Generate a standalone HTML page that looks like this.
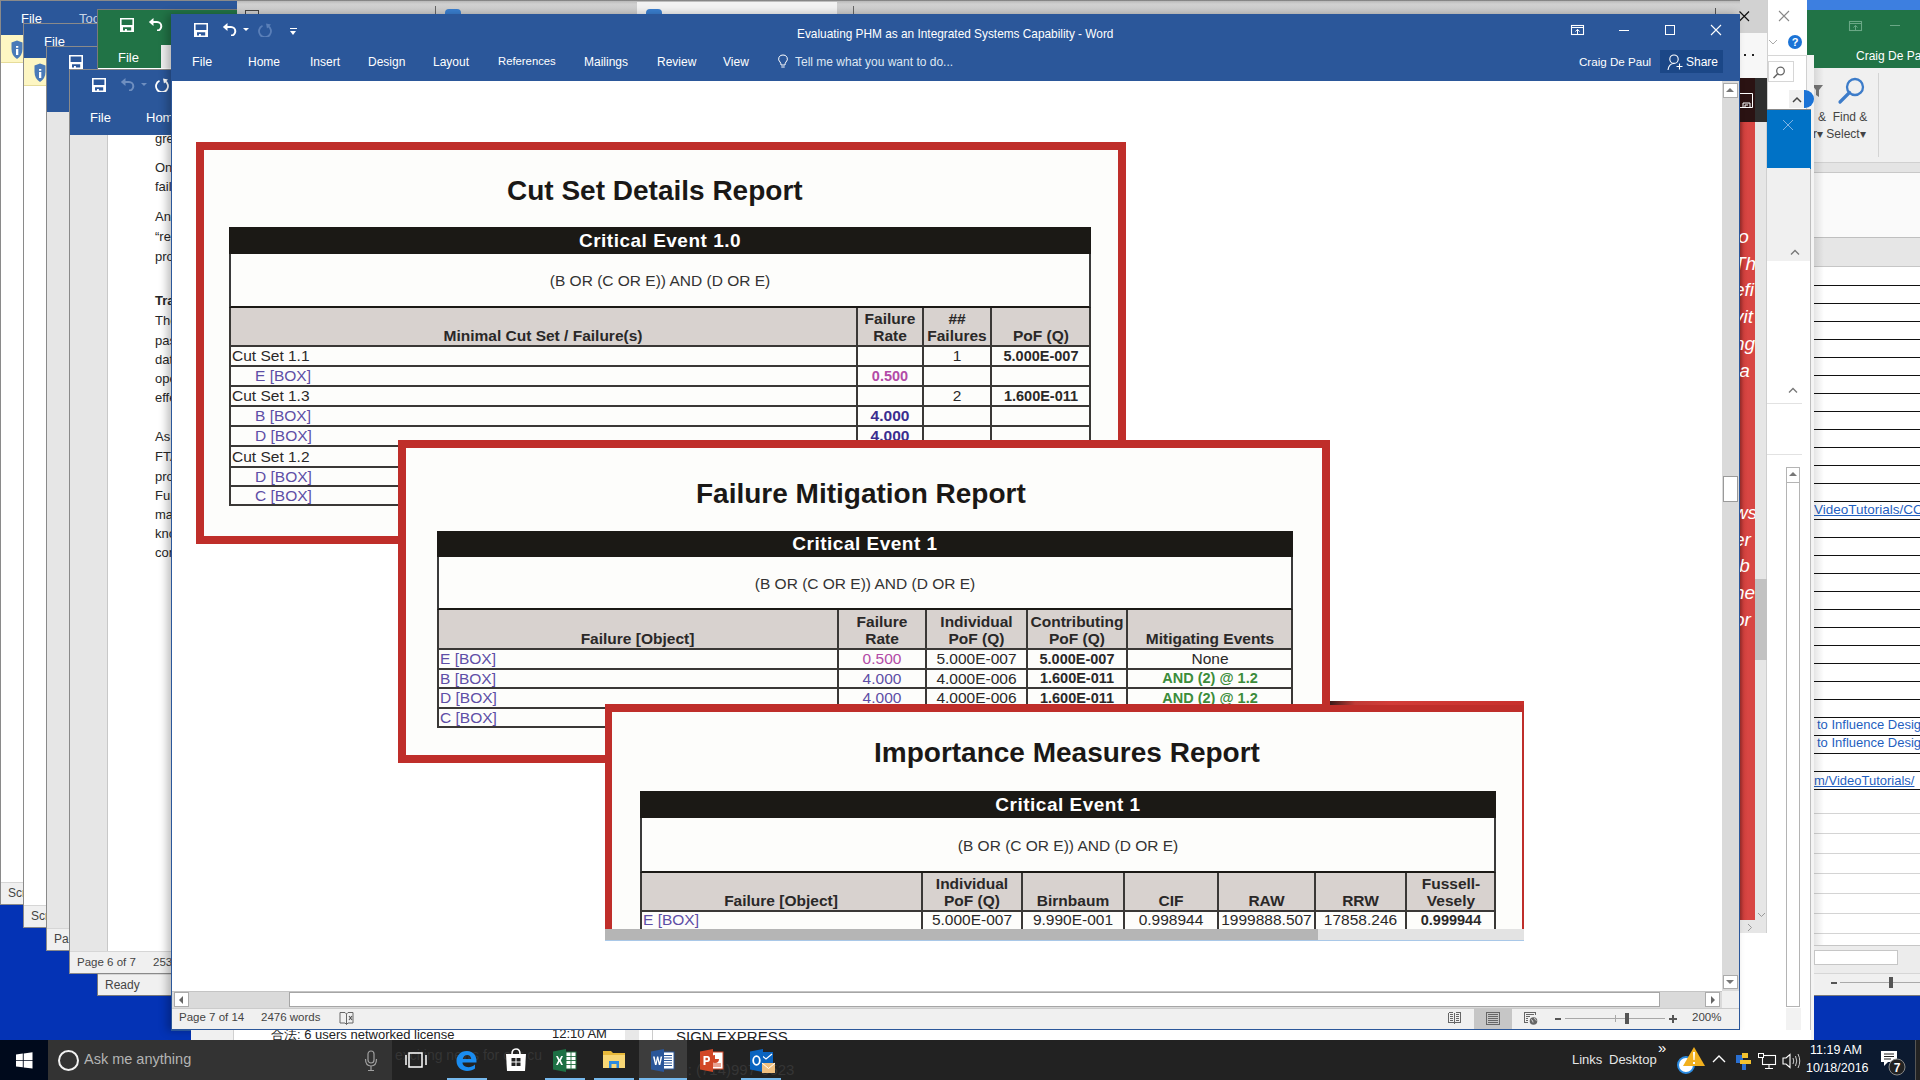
<!DOCTYPE html>
<html><head><meta charset="utf-8">
<style>
*{margin:0;padding:0;box-sizing:border-box}
html,body{width:1920px;height:1080px;overflow:hidden;background:#0433b5;font-family:"Liberation Sans",sans-serif;}
.a{position:absolute}
.wt{color:#fff;font-size:12px;white-space:nowrap}
.blue{background:#2b579a}
.st{background:#f0f0f0;border-top:1px solid #d6d6d6;color:#444;font-size:12px;white-space:nowrap;padding-left:7px;line-height:21px}

.rb{position:absolute;background:#fdfdfb;border:8px solid #bf2e2a}
.tt{position:absolute;font-weight:bold;font-size:28px;color:#1a1816;white-space:nowrap;letter-spacing:0}
.blk{position:absolute;background:#1b1915;color:#fff;font-weight:bold;font-size:19px;letter-spacing:0.5px;text-align:center;white-space:nowrap}
.expr{position:absolute;background:#fdfdfb;border-left:2px solid #3b3b3b;border-right:2px solid #3b3b3b;border-bottom:2.5px solid #1b1915;color:#333;font-size:15.5px;text-align:center;white-space:nowrap}
.c{position:absolute;white-space:nowrap;font-size:15.5px;color:#2a2828;overflow:hidden}
.hd{background:#d8d2cf;font-weight:bold;text-align:center;line-height:17px;color:#2a2828;border-right:1.5px solid #333}
.pu{color:#5d4ea6}
.pk{color:#b24aa6}
.bl{color:#3b2d8f;font-weight:bold}
.gr{color:#3c8c3a}
.b{font-weight:bold;font-size:14.5px}
</style></head><body>

<svg width="0" height="0" style="position:absolute">
 <defs>
  <symbol id="save" viewBox="0 0 14 14"><path fill="currentColor" fill-rule="evenodd" d="M0 0H14V14H0Z M1.6 1.6V6.9H12.4V1.6Z M3 9.3V12.5H5V10.9H6.9V12.5H11.2V9.3Z"/></symbol>
  <symbol id="undo" viewBox="0 0 18 14"><path fill="currentColor" d="M0.8 5 L5.5 1 L5.5 9 Z"/><path d="M5 5 H9 A4.3 4.3 0 0 1 9 13.6" fill="none" stroke="currentColor" stroke-width="2"/></symbol>
  <symbol id="redo" viewBox="0 0 14 14"><path d="M9.5 2.2 A6 6 0 1 1 4.5 2.2" fill="none" stroke="currentColor" stroke-width="1.8" transform="translate(0,0.5)"/><path fill="currentColor" d="M8 0.5 L13 1.5 L9 5.5 Z"/></symbol>
 </defs>
</svg>

<!-- ============ Window A ============ -->
<div class="a" style="left:0;top:0;width:1920px;height:905px;background:#fff;border:1px solid #8a8a8a"></div>
<div class="a blue" style="left:1px;top:1px;width:1919px;height:34px"></div>
<div class="a wt" style="left:21px;top:11px;font-size:13px">File</div>
<div class="a wt" style="left:79px;top:11px;font-size:13px;color:#c8d4e6">Tools</div>
<div class="a" style="left:1px;top:35px;width:1919px;height:28px;background:#fdf6c3;border-bottom:1px solid #e6dc9a"></div>
<div class="a st" style="left:1px;top:882px;width:1919px;height:22px">Screen</div>
<svg class="a" style="left:11px;top:40px" width="12" height="20"><path d="M6 0.5 L11.5 2.5 V9 Q11.5 15.5 6 19 Q0.5 15.5 0.5 9 V2.5Z" fill="#4a7ab8"/><path d="M5 6H7.3V7.8H5Z M5 9H7.3V15H5Z" fill="#fff"/></svg>

<!-- ============ Window B ============ -->
<div class="a" style="left:23px;top:23px;width:1897px;height:905px;background:#fff;border:1px solid #8a8a8a"></div>
<div class="a blue" style="left:24px;top:24px;width:1896px;height:34px"></div>
<div class="a wt" style="left:44px;top:34px;font-size:13px">File</div>
<div class="a" style="left:24px;top:58px;width:1896px;height:28px;background:#fdf6c3;border-bottom:1px solid #e6dc9a"></div>
<div class="a st" style="left:24px;top:905px;width:1896px;height:22px">Screen</div>
<svg class="a" style="left:34px;top:63px" width="12" height="20"><path d="M6 0.5 L11.5 2.5 V9 Q11.5 15.5 6 19 Q0.5 15.5 0.5 9 V2.5Z" fill="#4a7ab8"/><path d="M5 6H7.3V7.8H5Z M5 9H7.3V15H5Z" fill="#fff"/></svg>

<!-- ============ Window C ============ -->
<div class="a" style="left:46px;top:46px;width:1874px;height:905px;background:#e6e6e6;border:1px solid #8a8a8a"></div>
<div class="a blue" style="left:47px;top:47px;width:1873px;height:65px"></div>
<div class="a st" style="left:47px;top:928px;width:1873px;height:22px">Page</div>
<svg class="a" style="left:69px;top:55px;color:#fff" width="14" height="14"><use href="#save"/></svg>

<!-- ============ Excel ============ -->
<div class="a" style="left:97px;top:9px;width:1823px;height:987px;background:#fff;border:1px solid #7a7a7a"></div>
<div class="a" style="left:98px;top:10px;width:1822px;height:58px;background:#217346"></div>
<div class="a wt" style="left:118px;top:50px;font-size:13px">File</div>
<div class="a" style="left:161px;top:45px;width:12px;height:23px;background:#f0f0f0"></div>
<div class="a st" style="left:98px;top:974px;width:1822px;height:21px">Ready</div>
<svg class="a" style="left:120px;top:18px;color:#fff" width="14" height="14"><use href="#save"/></svg>
<svg class="a" style="left:148px;top:17px;color:#fff" width="18" height="14"><use href="#undo"/></svg>

<!-- ============ Window D ============ -->
<div class="a" style="left:69px;top:69px;width:1851px;height:905px;background:#fff;border:1px solid #8a8a8a"></div>
<div class="a blue" style="left:70px;top:70px;width:1850px;height:65px"></div>
<div class="a" style="left:70px;top:135px;width:38px;height:816px;background:#e6e6e6;border-right:1px solid #c8c8c8"></div>
<svg class="a" style="left:92px;top:78px;color:#fff" width="14" height="14"><use href="#save"/></svg>
<svg class="a" style="left:120px;top:77px;color:#6f8fc0" width="18" height="14"><use href="#undo"/></svg>
<div class="a" style="left:141px;top:83px;width:0;height:0;border-left:3px solid transparent;border-right:3px solid transparent;border-top:3px solid #6f8fc0"></div>
<svg class="a" style="left:155px;top:78px;color:#fff" width="14" height="14"><use href="#redo"/></svg>
<div class="a wt" style="left:90px;top:110px;font-size:13px">File</div>
<div class="a wt" style="left:146px;top:110px;font-size:13px">Home</div>
<div class="a st" style="left:70px;top:951px;width:1850px;height:22px"><span style="font-size:11.5px">Page 6 of 7</span><span style="position:absolute;left:83px;font-size:11.5px">2536 words</span></div>


<div class="a" style="left:108px;top:135px;width:63px;height:816px;overflow:hidden;font-size:13px;color:#262626;line-height:19.4px">
 <div class="a" style="left:47px;top:-6px;white-space:nowrap">greater</div>
 <div class="a" style="left:47px;top:23px;white-space:nowrap">One</div>
 <div class="a" style="left:47px;top:42px;white-space:nowrap">failure</div>
 <div class="a" style="left:47px;top:72px;white-space:nowrap">Another</div>
 <div class="a" style="left:47px;top:92px;white-space:nowrap">&ldquo;relia</div>
 <div class="a" style="left:47px;top:112px;white-space:nowrap">product</div>
 <div class="a" style="left:47px;top:156px;white-space:nowrap;font-weight:bold">Trade</div>
 <div class="a" style="left:47px;top:176px;white-space:nowrap">The</div>
 <div class="a" style="left:47px;top:196px;white-space:nowrap">past</div>
 <div class="a" style="left:47px;top:215px;white-space:nowrap">data</div>
 <div class="a" style="left:47px;top:234px;white-space:nowrap">operat</div>
 <div class="a" style="left:47px;top:253px;white-space:nowrap">effect</div>
 <div class="a" style="left:47px;top:292px;white-space:nowrap">As an</div>
 <div class="a" style="left:47px;top:312px;white-space:nowrap">FTA</div>
 <div class="a" style="left:47px;top:332px;white-space:nowrap">product</div>
 <div class="a" style="left:47px;top:351px;white-space:nowrap">Funct</div>
 <div class="a" style="left:47px;top:370px;white-space:nowrap">many</div>
 <div class="a" style="left:47px;top:389px;white-space:nowrap">know</div>
 <div class="a" style="left:47px;top:408px;white-space:nowrap">cont</div>
</div>

<!-- ============ Browser strip ============ -->
<div class="a" style="left:237px;top:0;width:1530px;height:14px;background:linear-gradient(#6a6a6a 0px,#bdbdbd 1.5px,#d0d0d0 4px,#cdcdcd 14px)"></div>
<div class="a" style="left:637px;top:2px;width:200px;height:12px;background:#f2f2f2"></div>
<div class="a" style="left:245px;top:10px;width:14px;height:6px;border:1.5px solid #444;border-bottom:none"></div>
<div class="a" style="left:435px;top:6px;width:1px;height:8px;background:#666"></div>
<div class="a" style="left:445px;top:9px;width:16px;height:6px;border-radius:4px 4px 0 0;background:#3a7fd0"></div>
<div class="a" style="left:646px;top:9px;width:16px;height:6px;border-radius:4px 4px 0 0;background:#3a7fd0"></div>
<div class="a" style="left:853px;top:6px;width:1px;height:8px;background:#666"></div>
<div class="a" style="left:1715px;top:8px;width:1px;height:6px;background:#555"></div>


<!-- ============ RIGHT SIDE: Excel right part ============ -->
<div class="a" style="left:1806px;top:0;width:114px;height:10px;background:#3d7fe0"></div>
<div class="a" style="left:1806px;top:10px;width:114px;height:58px;background:#217346"></div>
<svg class="a" style="left:1848px;top:20px" width="16" height="12"><rect x="1.5" y="1.5" width="12" height="9" fill="none" stroke="#6aa886" stroke-width="1.1"/><path d="M1.5 3.5H13.5M7.5 10V5.5M5.5 7.5L7.5 5.3L9.5 7.5" fill="none" stroke="#6aa886"/></svg>
<div class="a" style="left:1890px;top:25px;width:10px;height:1px;background:#6aa886"></div>
<div class="a wt" style="left:1856px;top:49px;font-size:12px">Craig De Paul</div>
<div class="a" style="left:1814px;top:68px;width:106px;height:95px;background:#f0f0f0"></div>
<svg class="a" style="left:1812px;top:84px" width="12" height="14"><path d="M0 1H11L7 6V13L4 11V6Z" fill="#777"/></svg>
<svg class="a" style="left:1837px;top:77px" width="30" height="28"><circle cx="18" cy="10" r="8" fill="none" stroke="#3d7cc9" stroke-width="2.3"/><path d="M12.5 15.5L3 25" stroke="#3d7cc9" stroke-width="3.2" stroke-linecap="round"/></svg>
<div class="a" style="left:1818px;top:110px;font-size:12px;color:#444;white-space:nowrap">&amp;&nbsp;&nbsp;Find &amp;</div>
<div class="a" style="left:1813px;top:127px;font-size:12px;color:#444;white-space:nowrap">r&#9662;&nbsp;Select&#9662;</div>
<div class="a" style="left:1878px;top:73px;width:1px;height:84px;background:#d4d4d4"></div>
<div class="a" style="left:1814px;top:162px;width:106px;height:10px;background:#e4e4e4;border-top:1px solid #d0d0d0"></div>
<div class="a" style="left:1814px;top:172px;width:106px;height:65px;background:#fafafa;border-top:1px solid #c8c8c8"></div>
<div class="a" style="left:1814px;top:237px;width:106px;height:30px;background:#e6e6e6;border-top:1px solid #bfbfbf;border-bottom:1px solid #c6c6c6"></div>
<div class="a" style="left:1814px;top:267px;width:106px;height:678px;background:#fff;overflow:hidden">
<div class="a" style="left:0;top:18px;width:110px;height:1px;background:#111"></div>
<div class="a" style="left:0;top:36px;width:110px;height:1px;background:#111"></div>
<div class="a" style="left:0;top:54px;width:110px;height:1px;background:#111"></div>
<div class="a" style="left:0;top:72px;width:110px;height:1px;background:#111"></div>
<div class="a" style="left:0;top:90px;width:110px;height:1px;background:#111"></div>
<div class="a" style="left:0;top:108px;width:110px;height:1px;background:#111"></div>
<div class="a" style="left:0;top:126px;width:110px;height:1px;background:#111"></div>
<div class="a" style="left:0;top:144px;width:110px;height:1px;background:#111"></div>
<div class="a" style="left:0;top:162px;width:110px;height:1px;background:#111"></div>
<div class="a" style="left:0;top:180px;width:110px;height:1px;background:#111"></div>
<div class="a" style="left:0;top:198px;width:110px;height:1px;background:#111"></div>
<div class="a" style="left:0;top:216px;width:110px;height:1px;background:#111"></div>
<div class="a" style="left:0;top:234px;width:110px;height:1px;background:#111"></div>
<div class="a" style="left:0;top:252px;width:110px;height:1px;background:#111"></div>
<div class="a" style="left:0;top:270px;width:110px;height:1px;background:#111"></div>
<div class="a" style="left:0;top:288px;width:110px;height:1px;background:#111"></div>
<div class="a" style="left:0;top:306px;width:110px;height:1px;background:#111"></div>
<div class="a" style="left:0;top:324px;width:110px;height:1px;background:#111"></div>
<div class="a" style="left:0;top:342px;width:110px;height:1px;background:#111"></div>
<div class="a" style="left:0;top:360px;width:110px;height:1px;background:#111"></div>
<div class="a" style="left:0;top:378px;width:110px;height:1px;background:#111"></div>
<div class="a" style="left:0;top:396px;width:110px;height:1px;background:#111"></div>
<div class="a" style="left:0;top:414px;width:110px;height:1px;background:#111"></div>
<div class="a" style="left:0;top:432px;width:110px;height:1px;background:#111"></div>
<div class="a" style="left:0;top:450px;width:110px;height:1px;background:#111"></div>
<div class="a" style="left:0;top:468px;width:110px;height:1px;background:#111"></div>
<div class="a" style="left:0;top:486px;width:110px;height:1px;background:#111"></div>
<div class="a" style="left:0;top:504px;width:110px;height:1px;background:#111"></div>
<div class="a" style="left:0;top:522px;width:110px;height:1px;background:#111"></div>
<div class="a" style="left:0;top:546px;width:110px;height:1px;background:#d4d4d4"></div>
<div class="a" style="left:0;top:566px;width:110px;height:1px;background:#d4d4d4"></div>
<div class="a" style="left:0;top:586px;width:110px;height:1px;background:#d4d4d4"></div>
<div class="a" style="left:0;top:606px;width:110px;height:1px;background:#d4d4d4"></div>
<div class="a" style="left:0;top:626px;width:110px;height:1px;background:#d4d4d4"></div>
<div class="a" style="left:0;top:646px;width:110px;height:1px;background:#d4d4d4"></div>
<div class="a" style="left:0;top:666px;width:110px;height:1px;background:#d4d4d4"></div>
 <div class="a" style="left:0;top:235px;font-size:13.5px;color:#1f5fbf;text-decoration:underline;white-space:nowrap">VideoTutorials/CO-</div>
 <div class="a" style="left:3px;top:450px;font-size:13px;color:#1f5fbf;white-space:nowrap">to Influence Design</div>
 <div class="a" style="left:3px;top:468px;font-size:13px;color:#1f5fbf;white-space:nowrap">to Influence Design</div>
 <div class="a" style="left:0;top:506px;font-size:13px;color:#1f5fbf;text-decoration:underline;white-space:nowrap">m/VideoTutorials/</div>
</div>
<div class="a" style="left:1814px;top:68px;width:10px;height:905px;background:linear-gradient(to right,rgba(0,0,0,0.10),rgba(0,0,0,0))"></div>
<div class="a" style="left:1814px;top:945px;width:106px;height:28px;background:#ececec;border-top:1px solid #c6c6c6"></div>
<div class="a" style="left:1814px;top:950px;width:84px;height:15px;background:#fff;border:1px solid #c6c6c6"></div>
<div class="a" style="left:1814px;top:973px;width:106px;height:22px;background:#f0f0f0;border-top:1px solid #d6d6d6"></div>
<div class="a" style="left:1831px;top:982px;width:6px;height:2px;background:#555"></div>
<div class="a" style="left:1840px;top:982px;width:80px;height:1px;background:#aaa"></div>
<div class="a" style="left:1889px;top:977px;width:4px;height:11px;background:#555"></div>
<div class="a" style="left:1810px;top:155px;width:4px;height:885px;background:#f4f4f4;border-left:1px solid #bdbdbd"></div>

<!-- ============ RIGHT SIDE: small windows 1767-1814 ============ -->
<div class="a" style="left:1767px;top:0;width:40px;height:56px;background:#fff;border-left:1px solid #d0d0d0"></div>
<svg class="a" style="left:1778px;top:10px" width="12" height="12"><path d="M1 1L11 11M11 1L1 11" stroke="#888" stroke-width="1.1"/></svg>
<svg class="a" style="left:1768px;top:39px" width="10" height="6"><path d="M1 1L5 5L9 1" fill="none" stroke="#aaa" stroke-width="1"/></svg>
<div class="a" style="left:1788px;top:35px;width:14px;height:14px;border-radius:50%;background:#1b73d6;color:#fff;font-size:11px;font-weight:bold;text-align:center;line-height:14px">?</div>
<div class="a" style="left:1767px;top:55px;width:47px;height:55px;background:#fff;border-top:1px solid #d6d6d6;border-left:1px solid #d0d0d0"></div>
<div class="a" style="left:1806px;top:55px;width:8px;height:100px;background:#f4f4f4;border-left:1px solid #d0d0d0"></div>
<div class="a" style="left:1768px;top:61px;width:26px;height:21px;background:#fff;border:1px solid #d6d6d6"></div>
<svg class="a" style="left:1772px;top:66px" width="14" height="13"><circle cx="8.5" cy="5" r="3.8" fill="none" stroke="#666" stroke-width="1.3"/><path d="M6 7.5L1.5 12" stroke="#666" stroke-width="1.6"/></svg>
<div class="a" style="left:1789px;top:90px;width:16px;height:18px;background:#f0f0f0"></div>
<svg class="a" style="left:1792px;top:96px" width="10" height="7"><path d="M1 6L5 2L9 6" fill="none" stroke="#444" stroke-width="1.5"/></svg>
<div class="a" style="left:1804px;top:90px;width:10px;height:18px;border-radius:0 9px 9px 0;background:#1b73d6"></div>
<div class="a" style="left:1767px;top:109px;width:44px;height:60px;background:#0072c6;border-top:1px solid #888"></div>
<svg class="a" style="left:1782px;top:119px" width="12" height="12"><path d="M1 1L11 11M11 1L1 11" stroke="#7fb3e3" stroke-width="1"/></svg>
<div class="a" style="left:1767px;top:168px;width:43px;height:93px;background:#f0f0f0"></div>
<svg class="a" style="left:1790px;top:249px" width="10" height="6"><path d="M1 5.5L5 1.5L9 5.5" fill="none" stroke="#777" stroke-width="1.3"/></svg>
<div class="a" style="left:1767px;top:261px;width:43px;height:746px;background:#fff"></div>
<svg class="a" style="left:1788px;top:387px" width="10" height="6"><path d="M1 5.5L5 1.5L9 5.5" fill="none" stroke="#777" stroke-width="1.3"/></svg>
<div class="a" style="left:1767px;top:403px;width:35px;height:1px;background:#e2e2e2"></div>
<div class="a" style="left:1767px;top:454px;width:35px;height:1px;background:#e2e2e2"></div>
<div class="a" style="left:1786px;top:467px;width:14px;height:540px;background:#fff;border:1px solid #b4b4b4"></div>
<div class="a" style="left:1786px;top:482px;width:14px;height:1px;background:#b4b4b4"></div>
<div class="a" style="left:1789px;top:472px;width:0;height:0;border-left:4px solid transparent;border-right:4px solid transparent;border-bottom:4px solid #777"></div>
<div class="a" style="left:1767px;top:1007px;width:43px;height:33px;background:#fff"></div>
<div class="a" style="left:1786px;top:1008px;width:15px;height:32px;background:#f2f2f2"></div>

<!-- ============ RIGHT SIDE: browser strip 1740-1767 ============ -->
<div class="a" style="left:1740px;top:0;width:27px;height:33px;background:#d2d2d2"></div>
<svg class="a" style="left:1739px;top:11px" width="11" height="11"><path d="M0.5 0.5L10 10M10 0.5L0.5 10" stroke="#111" stroke-width="1.2"/></svg>
<div class="a" style="left:1740px;top:33px;width:27px;height:45px;background:#f7f7f7"></div>
<div class="a" style="left:1744px;top:54px;width:2px;height:2px;background:#222"></div>
<div class="a" style="left:1752px;top:54px;width:2px;height:2px;background:#222"></div>
<div class="a" style="left:1740px;top:78px;width:15px;height:44px;background:#2a1212"></div>
<div class="a" style="left:1755px;top:78px;width:12px;height:44px;background:#2e2e2e"></div>
<svg class="a" style="left:1740px;top:93px" width="13" height="15"><path d="M0 0.5H12.5V14.5H0 M3 14.5V10H10V14.5 M5 14.5V12H8" fill="none" stroke="#fff" stroke-width="1"/></svg>
<div class="a" style="left:1740px;top:122px;width:15px;height:798px;background:linear-gradient(to right,#9a2c2a 0px,#cf403d 4px,#d84643 8px)"></div>
<div class="a" style="left:1740px;top:122px;width:15px;height:798px;overflow:hidden;color:#fff;font-style:italic;font-size:19px;line-height:26.7px">
 <div class="a" style="left:-6px;top:102px;white-space:nowrap">io<br>Th<br>efi<br>vit<br>ng<br>&nbsp;a</div>
 <div class="a" style="left:-6px;top:378px;white-space:nowrap">ws<br>er<br>&nbsp;b<br>he<br>or</div>
</div>
<div class="a" style="left:1755px;top:122px;width:12px;height:811px;background:#e6e6e6;border-right:1px solid #cfcfcf"></div>
<div class="a" style="left:1755px;top:579px;width:12px;height:81px;background:#c2c2c2"></div>
<div class="a" style="left:1740px;top:920px;width:15px;height:13px;background:#e6e6e6"></div>
<svg class="a" style="left:1757px;top:912px" width="9" height="6"><path d="M1 1L4.5 4.5L8 1" fill="none" stroke="#999" stroke-width="1"/></svg>
<svg class="a" style="left:1747px;top:923px" width="6" height="9"><path d="M1 1L4.5 4.5L1 8" fill="none" stroke="#999" stroke-width="1"/></svg>
<div class="a" style="left:1740px;top:933px;width:27px;height:97px;background:#fff"></div>

<!-- ============ WORD MAIN ============ -->
<div id="word" class="a" style="left:171px;top:14px;width:1569px;height:1017px;background:#fff;border:1px solid #2b579a;box-shadow:-4px 0 8px rgba(0,0,0,0.25)"></div>
<div class="a blue" style="left:172px;top:15px;width:1567px;height:66px"></div>
<div class="a wt" style="left:797px;top:27px;font-size:11.85px">Evaluating PHM as an Integrated Systems Capability - Word</div>


<svg class="a" style="left:194px;top:23px;color:#fff" width="14" height="14"><use href="#save"/></svg>
<svg class="a" style="left:222px;top:22px;color:#fff" width="18" height="14"><use href="#undo"/></svg>
<div class="a" style="left:243px;top:28px;width:0;height:0;border-left:3px solid transparent;border-right:3px solid transparent;border-top:3px solid #fff"></div>
<svg class="a" style="left:258px;top:23px;color:#5a7fb8" width="14" height="14"><use href="#redo"/></svg>
<div class="a" style="left:290px;top:28px;width:7px;height:1px;background:#fff"></div>
<div class="a" style="left:290px;top:31px;width:0;height:0;border-left:3.5px solid transparent;border-right:3.5px solid transparent;border-top:4px solid #fff"></div>
<div class="a wt" style="left:192px;top:55px;font-size:12.5px">File</div>
<div class="a wt" style="left:248px;top:55px;font-size:12px">Home</div>
<div class="a wt" style="left:310px;top:55px;font-size:12px">Insert</div>
<div class="a wt" style="left:368px;top:55px;font-size:12px">Design</div>
<div class="a wt" style="left:433px;top:55px;font-size:12px">Layout</div>
<div class="a wt" style="left:498px;top:55px;font-size:11.3px">References</div>
<div class="a wt" style="left:584px;top:55px;font-size:12px">Mailings</div>
<div class="a wt" style="left:657px;top:55px;font-size:12px">Review</div>
<div class="a wt" style="left:723px;top:55px;font-size:12px">View</div>
<svg class="a" style="left:778px;top:54px" width="10" height="15"><path d="M5 1 A4 4 0 0 1 8 8 Q7 9 7 11 H3 Q3 9 2 8 A4 4 0 0 1 5 1Z" fill="none" stroke="#fff" stroke-width="1"/><path d="M3.3 13 H6.7" stroke="#fff"/></svg>
<div class="a wt" style="left:795px;top:55px;font-size:12px;color:#dde6f2">Tell me what you want to do...</div>
<div class="a wt" style="left:1579px;top:55px;font-size:11.6px">Craig De Paul</div>
<div class="a" style="left:1660px;top:50px;width:63px;height:23px;background:#1b4787"></div>
<svg class="a" style="left:1667px;top:54px" width="16" height="16"><circle cx="7" cy="5.2" r="4.2" fill="none" stroke="#fff" stroke-width="1.1"/><path d="M1 16 Q2 9.5 7 9.5" fill="none" stroke="#fff" stroke-width="1.1"/><path d="M9.5 12.5H15.5M12.5 9.5V15.5" stroke="#fff" stroke-width="1.1"/></svg>
<div class="a wt" style="left:1686px;top:55px;font-size:12px">Share</div>
<svg class="a" style="left:1570px;top:24px" width="16" height="12"><rect x="1.5" y="1.5" width="12" height="9" fill="none" stroke="#fff" stroke-width="1.1"/><path d="M1.5 3.5H13.5" stroke="#fff"/><path d="M7.5 10V5.5 M5.5 7.5 L7.5 5.3 L9.5 7.5" fill="none" stroke="#fff" stroke-width="1"/></svg>
<div class="a" style="left:1619px;top:30px;width:10px;height:1px;background:#fff"></div>
<div class="a" style="left:1665px;top:25px;width:10px;height:10px;border:1px solid #fff"></div>
<svg class="a" style="left:1710px;top:24px" width="12" height="12"><path d="M1 1L11 11M11 1L1 11" stroke="#fff" stroke-width="1.1"/></svg>


<!-- Word doc scrollbars & status -->
<div class="a" style="left:1722px;top:81px;width:17px;height:910px;background:#dadada"></div>
<div class="a" style="left:1723px;top:83px;width:15px;height:15px;background:#fff;border:1px solid #ababab"></div>
<div class="a" style="left:1726px;top:88px;width:0;height:0;border-left:4.5px solid transparent;border-right:4.5px solid transparent;border-bottom:4px solid #777"></div>
<div class="a" style="left:1723px;top:975px;width:15px;height:14px;background:#fff;border:1px solid #ababab"></div>
<div class="a" style="left:1726px;top:980px;width:0;height:0;border-left:4.5px solid transparent;border-right:4.5px solid transparent;border-top:4px solid #777"></div>
<div class="a" style="left:1723px;top:476px;width:15px;height:26px;background:#fff;border:1px solid #9a9a9a"></div>
<div class="a" style="left:172px;top:991px;width:1550px;height:17px;background:#dadada;border-top:1px solid #c4c4c4"></div>
<div class="a" style="left:174px;top:992px;width:15px;height:15px;background:#fff;border:1px solid #ababab"></div>
<div class="a" style="left:179px;top:996px;width:0;height:0;border-top:4px solid transparent;border-bottom:4px solid transparent;border-right:4px solid #666"></div>
<div class="a" style="left:289px;top:992px;width:1371px;height:15px;background:#fff;border:1px solid #a6a6a6"></div>
<div class="a" style="left:1705px;top:992px;width:15px;height:15px;background:#fff;border:1px solid #ababab"></div>
<div class="a" style="left:1711px;top:996px;width:0;height:0;border-top:4px solid transparent;border-bottom:4px solid transparent;border-left:4px solid #666"></div>
<div class="a" style="left:1722px;top:991px;width:17px;height:17px;background:#f0f0f0"></div>
<div class="a" style="left:172px;top:1008px;width:1567px;height:22px;background:#f0f0f0;border-top:1px solid #cbcbcb"></div>
<div class="a" style="left:179px;top:1011px;font-size:11.5px;color:#444;white-space:nowrap">Page 7 of 14</div>
<div class="a" style="left:261px;top:1011px;font-size:11.5px;color:#444;white-space:nowrap">2476 words</div>
<svg class="a" style="left:339px;top:1011px" width="16" height="15"><path d="M1 1.5 H6 L7.5 3 V13.5 L6 12 H1 Z M7.5 3 L9 1.5 H14 V12 H9 L7.5 13.5" fill="none" stroke="#666" stroke-width="1"/><path d="M10 5 L13 9 M13 5 L10 9" stroke="#555" stroke-width="1.1"/></svg>
<div class="a" style="left:1474px;top:1008px;width:38px;height:21px;background:#c6c6c6"></div>
<svg class="a" style="left:1440px;top:1005px" width="100" height="25" shape-rendering="crispEdges">
<g fill="none" stroke="#666" stroke-width="1">
<path d="M8.5 7.5V17.5H14.5M20.5 7.5V17.5H14.5M8.5 7.5H13M16 7.5H20.5"/>
<path d="M10 9.5H13M16 9.5H19M10 11.5H13M16 11.5H19M10 13.5H13M16 13.5H19M10 15.5H13M16 15.5H19"/>
<path d="M14.5 8V19"/>
<path d="M46.5 7.5H59.5V19.5H46.5Z"/>
<path d="M48 9.5H58M48 11.5H58M48 13.5H58M48 15.5H58M48 17.5H58"/>
<path d="M89.5 7.5H84.5V17.5H88M84.5 7.5H95.5V10"/>
<path d="M86 9.5H94M86 11.5H90M86 13.5H88M86 15.5H88"/>
</g>
<circle cx="93.5" cy="16" r="3.8" fill="#666" shape-rendering="auto"/>
<path d="M91 14.5Q93 15 93 17.5M94.5 13Q95 15 96.5 15.5" stroke="#f0f0f0" stroke-width="0.8" fill="none" shape-rendering="auto"/>
</svg>
<div class="a" style="left:1555px;top:1018px;width:6px;height:2px;background:#555"></div>
<div class="a" style="left:1565px;top:1018px;width:100px;height:1px;background:#a8a8a8"></div>
<div class="a" style="left:1615px;top:1015px;width:1px;height:7px;background:#a8a8a8"></div>
<div class="a" style="left:1625px;top:1013px;width:4px;height:11px;background:#555"></div>
<div class="a" style="left:1669px;top:1018px;width:8px;height:2px;background:#555"></div>
<div class="a" style="left:1672px;top:1015px;width:2px;height:8px;background:#555"></div>
<div class="a" style="left:1692px;top:1011px;font-size:11.5px;color:#444;white-space:nowrap">200%</div>
<div class="a" style="left:171px;top:1029px;width:1569px;height:1px;background:#2b579a"></div>



<!-- ============ Outlook strip behind taskbar ============ -->
<div class="a" style="left:191px;top:1030px;width:1550px;height:10px;background:#fff;overflow:hidden">
 <div class="a" style="left:0;top:0;width:43px;height:10px;background:#f0f0f0;border-right:1px solid #d0d0d0"></div>
 <div class="a" style="left:80px;top:-4px;font-size:13px;color:#222;white-space:nowrap">&#21512;&#27861;: 6 users networked license</div>
 <div class="a" style="left:361px;top:-4px;font-size:13px;color:#222;white-space:nowrap">12:10 AM</div>
 <div class="a" style="left:434px;top:0;width:14px;height:10px;background:#e8e8e8"></div>
 <div class="a" style="left:461px;top:0;width:1px;height:10px;background:#ccc"></div>
 <div class="a" style="left:485px;top:-2px;font-size:15px;color:#222;white-space:nowrap">SIGN EXPRESS</div>
</div>
<div class="a" style="left:1741px;top:1030px;width:70px;height:10px;background:#fff"></div>

<!-- ============ TASKBAR ============ -->
<div class="a" style="left:0;top:1040px;width:1920px;height:40px;background:#222222"></div>
<div class="a" style="left:0;top:1040px;width:48px;height:40px;background:#000a1c"></div>
<svg class="a" style="left:16px;top:1052px" width="17" height="17"><path fill="#fff" d="M0 2.4L6.8 1.5V7.9H0Z M7.7 1.4L16.5 0.2V7.9H7.7Z M0 8.8H6.8V15.3L0 14.4Z M7.7 8.8H16.5V16.6L7.7 15.4Z"/></svg>
<div class="a" style="left:48px;top:1040px;width:344px;height:40px;background:#333333"></div>
<div class="a" style="left:58px;top:1050px;width:21px;height:21px;border-radius:50%;border:2.2px solid #f2f2f2"></div>
<div class="a" style="left:84px;top:1051px;font-size:14.5px;color:#b4b4b4;white-space:nowrap">Ask me anything</div>
<svg class="a" style="left:364px;top:1050px" width="14" height="22"><rect x="4" y="1" width="6" height="12" rx="3" fill="none" stroke="#a0a0a0" stroke-width="1.2"/><path d="M1.5 9 Q1.5 16 7 16 Q12.5 16 12.5 9 M7 16V20 M4 20.5H10" fill="none" stroke="#a0a0a0" stroke-width="1.2"/></svg>
<div class="a" style="left:395px;top:1047px;font-size:14px;color:rgba(70,70,70,0.55);white-space:nowrap">exciting news for our cu</div>
<div class="a" style="left:676px;top:1061px;font-size:15px;color:rgba(70,70,70,0.55);white-space:nowrap">O: (714)997-5523</div>
<svg class="a" style="left:405px;top:1052px" width="22" height="16"><rect x="4" y="1" width="13" height="14" fill="none" stroke="#fff" stroke-width="1.5"/><path d="M1 3V13M21 3V13" stroke="#fff" stroke-width="1.5"/></svg>
<!-- edge -->
<svg class="a" style="left:456px;top:1050px" width="22" height="22"><path d="M11 1 C4 1 0.5 6 0.5 11 C0.5 17.5 6 21 11 21 C14.5 21 17 20 19 18.5 V14.5 C17 16.5 14.5 17.2 12.5 17.2 C8.5 17.2 6.5 15 6.5 12.5 H20.5 C21 6 17.5 1 11 1 Z M6.8 9 C7.3 6.5 9 5 11.2 5 C13.5 5 15 6.5 15.2 9Z" fill="#1a8cf0"/></svg>
<!-- store -->
<svg class="a" style="left:505px;top:1048px" width="22" height="24"><path d="M7 6 Q7 1 11 1 Q15 1 15 6" fill="none" stroke="#fff" stroke-width="1.6"/><path d="M1 6H21L20 23H2Z" fill="#fff"/><path d="M6.5 10H10.5V13.5H6.5Z M11.5 10H15.5V13.5H11.5Z M6.5 14.5H10.5V18H6.5Z M11.5 14.5H15.5V18H11.5Z" fill="#222"/></svg>
<!-- excel -->
<svg class="a" style="left:553px;top:1049px" width="24" height="23"><rect x="8" y="3" width="15" height="17" fill="#fff" stroke="#1d6b3c" stroke-width="1"/><path d="M13 3V20M18 3V20M8 7.5H23M8 11.5H23M8 15.5H23" stroke="#1d6b3c" stroke-width="0.9"/><path d="M0 2.5L13 0V23L0 20.5Z" fill="#1d7044"/><path d="M3 7L5.2 11.5L3 16H4.8L6.5 12.7L8.2 16H10L7.8 11.5L10 7H8.2L6.5 10.3L4.8 7Z" fill="#fff"/></svg>
<!-- explorer -->
<svg class="a" style="left:603px;top:1050px" width="23" height="19"><path d="M0 1H8L10 3H22V18H0Z" fill="#e8b93a"/><path d="M0 5H22V18H0Z" fill="#f8d775"/><path d="M6 11H16V18H13.5V14H8.5V18H6Z" fill="#2b8ae0"/></svg>
<!-- word highlighted -->
<div class="a" style="left:639px;top:1040px;width:48px;height:40px;background:#3d3d3d"></div>
<svg class="a" style="left:651px;top:1049px" width="24" height="23"><rect x="9" y="3" width="14" height="17" fill="#fff" stroke="#2a5699" stroke-width="1"/><path d="M12 6.5H21M12 9H21M12 11.5H21M12 14H21M12 16.5H21" stroke="#2a5699" stroke-width="1.1"/><path d="M0 2.5L13 0V23L0 20.5Z" fill="#2a5699"/><path d="M2 7.5H3.7L4.8 13.5L6 7.5H7.3L8.5 13.5L9.6 7.5H11.2L9.3 16H7.8L6.6 10.5L5.5 16H4Z" fill="#fff"/></svg>
<!-- ppt -->
<svg class="a" style="left:700px;top:1049px" width="24" height="23"><rect x="9" y="3" width="14" height="17" fill="#fff" stroke="#d24726" stroke-width="1"/><path d="M15 6A4 4 0 1 0 19 10H15Z" fill="#d24726"/><path d="M12 15H21M12 17H21" stroke="#d24726" stroke-width="1"/><path d="M0 2.5L13 0V23L0 20.5Z" fill="#d24726"/><path d="M3.5 7H7.5Q10 7 10 10Q10 13 7.5 13H5.5V16H3.5Z M5.5 8.8V11.2H7.3Q8 11.2 8 10Q8 8.8 7.3 8.8Z" fill="#fff"/></svg>
<!-- outlook -->
<svg class="a" style="left:750px;top:1049px" width="26" height="26"><rect x="9" y="3" width="14" height="14" fill="#0a64c0"/><path d="M10 5L16 10L22 5" fill="none" stroke="#fff" stroke-width="1.2"/><path d="M0 2.5L13 0V23L0 20.5Z" fill="#0a64c0"/><ellipse cx="6.5" cy="11.5" rx="3.3" ry="4.3" fill="none" stroke="#fff" stroke-width="1.8"/><rect x="12" y="14" width="13" height="10" fill="#f0c080"/><path d="M12 14L18.5 19.5L25 14" fill="none" stroke="#fff" stroke-width="1"/></svg>
<div class="a" style="left:447px;top:1078px;width:40px;height:2px;background:#76b9ed"></div>
<div class="a" style="left:545px;top:1078px;width:40px;height:2px;background:#76b9ed"></div>
<div class="a" style="left:594px;top:1078px;width:40px;height:2px;background:#76b9ed"></div>
<div class="a" style="left:639px;top:1078px;width:48px;height:2px;background:#76b9ed"></div>
<div class="a" style="left:741px;top:1078px;width:40px;height:2px;background:#76b9ed"></div>
<!-- tray -->
<div class="a" style="left:1572px;top:1052px;font-size:13px;color:#e6e6e6;white-space:nowrap">Links</div>
<div class="a" style="left:1609px;top:1052px;font-size:13px;color:#e6e6e6;white-space:nowrap">Desktop</div>
<div class="a" style="left:1658px;top:1039px;font-size:15px;color:#fff;white-space:nowrap">&#187;</div>
<div class="a" style="left:1677px;top:1056px;width:18px;height:18px;border-radius:50%;background:#fff;border:2.5px solid #2a8ae0"></div>
<svg class="a" style="left:1682px;top:1046px" width="24" height="21"><path d="M12 1L23 20H1Z" fill="#f2b01e"/><path d="M11 6H13L12.6 14H11.4Z M11 16H13V18H11Z" fill="#fff"/></svg>
<svg class="a" style="left:1712px;top:1054px" width="14" height="9"><path d="M1 8L7 2L13 8" fill="none" stroke="#fff" stroke-width="1.4"/></svg>
<svg class="a" style="left:1735px;top:1052px" width="17" height="19"><rect x="1" y="3" width="7" height="8" fill="#2a6fd0"/><rect x="7" y="1" width="6" height="5" fill="#f2c12e"/><rect x="5" y="8" width="11" height="4" fill="#f2c12e"/><rect x="7" y="12" width="4" height="6" fill="#2a6fd0"/></svg>
<svg class="a" style="left:1758px;top:1053px" width="19" height="17"><rect x="4.5" y="2.5" width="13" height="9" fill="none" stroke="#fff" stroke-width="1.1"/><rect x="0.5" y="0.5" width="5" height="4" fill="#222" stroke="#fff" stroke-width="1"/><path d="M11 11.5V15M7 15.5H15" stroke="#fff" stroke-width="1.1"/></svg>
<svg class="a" style="left:1782px;top:1053px" width="19" height="16"><path d="M1 5H4L8 1.5V14.5L4 11H1Z" fill="none" stroke="#fff" stroke-width="1.1"/><path d="M11 5Q12.5 8 11 11M13.5 3Q16 8 13.5 13M16 1Q19.5 8 16 15" fill="none" stroke="#ccc" stroke-width="1"/></svg>
<div class="a" style="left:1810px;top:1040px;width:105px;height:40px;background:#0c1a30"></div>
<div class="a" style="left:1915px;top:1040px;width:1px;height:40px;background:#555"></div>
<div class="a" style="left:1810px;top:1043px;font-size:12.5px;color:#fff;white-space:nowrap">11:19 AM</div>
<div class="a" style="left:1806px;top:1061px;font-size:12.5px;color:#fff;white-space:nowrap">10/18/2016</div>
<svg class="a" style="left:1880px;top:1050px" width="26" height="26"><path d="M1 1H17V12H8L4 16V12H1Z" fill="#fff"/><path d="M4 4H14M4 6.5H14M4 9H11" stroke="#222" stroke-width="1"/><circle cx="17" cy="17" r="8" fill="#222" stroke="#888" stroke-width="1"/><text x="17" y="21.5" font-size="12" fill="#fff" text-anchor="middle" font-family="Liberation Sans" font-weight="bold">7</text></svg>

<!--REPORTS-->
<div class="rb" style="left:196px;top:142px;width:930px;height:402px"></div>
<div class="blk" style="left:229px;top:227px;width:862px;height:27px;line-height:27px">Critical Event 1.0</div>
<div class="expr" style="left:229px;top:254px;width:862px;height:54px;line-height:54px">(B OR (C OR E)) AND (D OR E)</div>
<div class="a" style="left:229px;top:308px;width:862px;height:38px;background:#d8d2cf"></div>
<div class="c" style="left:229px;top:308px;width:628px;height:38px;font-weight:bold;text-align:center"><div style="position:absolute;left:0;right:0;bottom:2px;line-height:17px">Minimal Cut Set / Failure(s)</div></div>
<div class="c" style="left:857px;top:308px;width:66px;height:38px;font-weight:bold;text-align:center"><div style="position:absolute;left:0;right:0;bottom:2px;line-height:17px">Failure<br>Rate</div></div>
<div class="c" style="left:923px;top:308px;width:68px;height:38px;font-weight:bold;text-align:center"><div style="position:absolute;left:0;right:0;bottom:2px;line-height:17px">##<br>Failures</div></div>
<div class="c" style="left:991px;top:308px;width:100px;height:38px;font-weight:bold;text-align:center"><div style="position:absolute;left:0;right:0;bottom:2px;line-height:17px">PoF (Q)</div></div>
<div class="c " style="left:229px;top:346px;width:628px;height:20px;text-align:left;line-height:20px;padding-left:3px;">Cut Set 1.1</div>
<div class="c " style="left:923px;top:346px;width:68px;height:20px;text-align:center;line-height:20px;">1</div>
<div class="c b" style="left:991px;top:346px;width:100px;height:20px;text-align:center;line-height:20px;">5.000E-007</div>
<div class="c pu" style="left:229px;top:366px;width:628px;height:20px;text-align:left;line-height:20px;padding-left:26px;">E [BOX]</div>
<div class="c pk b" style="left:857px;top:366px;width:66px;height:20px;text-align:center;line-height:20px;">0.500</div>
<div class="c " style="left:229px;top:386px;width:628px;height:20px;text-align:left;line-height:20px;padding-left:3px;">Cut Set 1.3</div>
<div class="c " style="left:923px;top:386px;width:68px;height:20px;text-align:center;line-height:20px;">2</div>
<div class="c b" style="left:991px;top:386px;width:100px;height:20px;text-align:center;line-height:20px;">1.600E-011</div>
<div class="c pu" style="left:229px;top:406px;width:628px;height:20px;text-align:left;line-height:20px;padding-left:26px;">B [BOX]</div>
<div class="c bl" style="left:857px;top:406px;width:66px;height:20px;text-align:center;line-height:20px;">4.000</div>
<div class="c pu" style="left:229px;top:426px;width:628px;height:20px;text-align:left;line-height:20px;padding-left:26px;">D [BOX]</div>
<div class="c bl" style="left:857px;top:426px;width:66px;height:20px;text-align:center;line-height:20px;">4.000</div>
<div class="c " style="left:229px;top:446px;width:628px;height:21px;text-align:left;line-height:21px;padding-left:3px;">Cut Set 1.2</div>
<div class="c " style="left:923px;top:446px;width:68px;height:21px;text-align:center;line-height:21px;">2</div>
<div class="c pu" style="left:229px;top:467px;width:628px;height:19px;text-align:left;line-height:19px;padding-left:26px;">D [BOX]</div>
<div class="c pu" style="left:229px;top:486px;width:628px;height:19px;text-align:left;line-height:19px;padding-left:26px;">C [BOX]</div>
<div class="a" style="left:229px;top:308px;width:2px;height:197px;background:#3a3836"></div>
<div class="a" style="left:856.25px;top:308px;width:1.5px;height:197px;background:#3a3836"></div>
<div class="a" style="left:922.25px;top:308px;width:1.5px;height:197px;background:#3a3836"></div>
<div class="a" style="left:990.25px;top:308px;width:1.5px;height:197px;background:#3a3836"></div>
<div class="a" style="left:1089px;top:308px;width:2px;height:197px;background:#3a3836"></div>
<div class="a" style="left:229px;top:345.25px;width:862px;height:1.5px;background:#3a3836"></div>
<div class="a" style="left:229px;top:365.25px;width:862px;height:1.5px;background:#3a3836"></div>
<div class="a" style="left:229px;top:385.25px;width:862px;height:1.5px;background:#3a3836"></div>
<div class="a" style="left:229px;top:405.25px;width:862px;height:1.5px;background:#3a3836"></div>
<div class="a" style="left:229px;top:425.25px;width:862px;height:1.5px;background:#3a3836"></div>
<div class="a" style="left:229px;top:445.25px;width:862px;height:1.5px;background:#3a3836"></div>
<div class="a" style="left:229px;top:466.25px;width:862px;height:1.5px;background:#3a3836"></div>
<div class="a" style="left:229px;top:485.25px;width:862px;height:1.5px;background:#3a3836"></div>
<div class="a" style="left:229px;top:504.25px;width:862px;height:1.5px;background:#3a3836"></div>
<div class="tt" style="left:507px;top:177px;line-height:28px">Cut Set Details Report</div>
<div class="rb" style="left:398px;top:440px;width:932px;height:323px"></div>
<div class="blk" style="left:437px;top:531px;width:856px;height:26px;line-height:26px">Critical Event 1</div>
<div class="expr" style="left:437px;top:557px;width:856px;height:53px;line-height:53px">(B OR (C OR E)) AND (D OR E)</div>
<div class="a" style="left:437px;top:610px;width:856px;height:39px;background:#d8d2cf"></div>
<div class="c" style="left:437px;top:610px;width:401px;height:39px;font-weight:bold;text-align:center"><div style="position:absolute;left:0;right:0;bottom:2px;line-height:17px">Failure [Object]</div></div>
<div class="c" style="left:838px;top:610px;width:88px;height:39px;font-weight:bold;text-align:center"><div style="position:absolute;left:0;right:0;bottom:2px;line-height:17px">Failure<br>Rate</div></div>
<div class="c" style="left:926px;top:610px;width:101px;height:39px;font-weight:bold;text-align:center"><div style="position:absolute;left:0;right:0;bottom:2px;line-height:17px">Individual<br>PoF (Q)</div></div>
<div class="c" style="left:1027px;top:610px;width:100px;height:39px;font-weight:bold;text-align:center"><div style="position:absolute;left:0;right:0;bottom:2px;line-height:17px">Contributing<br>PoF (Q)</div></div>
<div class="c" style="left:1127px;top:610px;width:166px;height:39px;font-weight:bold;text-align:center"><div style="position:absolute;left:0;right:0;bottom:2px;line-height:17px">Mitigating Events</div></div>
<div class="c pu" style="left:437px;top:649px;width:401px;height:20px;text-align:left;line-height:20px;padding-left:3px;">E [BOX]</div>
<div class="c pk" style="left:838px;top:649px;width:88px;height:20px;text-align:center;line-height:20px;">0.500</div>
<div class="c " style="left:926px;top:649px;width:101px;height:20px;text-align:center;line-height:20px;">5.000E-007</div>
<div class="c b" style="left:1027px;top:649px;width:100px;height:20px;text-align:center;line-height:20px;">5.000E-007</div>
<div class="c " style="left:1127px;top:649px;width:166px;height:20px;text-align:center;line-height:20px;">None</div>
<div class="c pu" style="left:437px;top:669px;width:401px;height:19px;text-align:left;line-height:19px;padding-left:3px;">B [BOX]</div>
<div class="c pu" style="left:838px;top:669px;width:88px;height:19px;text-align:center;line-height:19px;">4.000</div>
<div class="c " style="left:926px;top:669px;width:101px;height:19px;text-align:center;line-height:19px;">4.000E-006</div>
<div class="c b" style="left:1027px;top:669px;width:100px;height:19px;text-align:center;line-height:19px;">1.600E-011</div>
<div class="c gr b" style="left:1127px;top:669px;width:166px;height:19px;text-align:center;line-height:19px;">AND (2) @ 1.2</div>
<div class="c pu" style="left:437px;top:688px;width:401px;height:20px;text-align:left;line-height:20px;padding-left:3px;">D [BOX]</div>
<div class="c pu" style="left:838px;top:688px;width:88px;height:20px;text-align:center;line-height:20px;">4.000</div>
<div class="c " style="left:926px;top:688px;width:101px;height:20px;text-align:center;line-height:20px;">4.000E-006</div>
<div class="c b" style="left:1027px;top:688px;width:100px;height:20px;text-align:center;line-height:20px;">1.600E-011</div>
<div class="c gr b" style="left:1127px;top:688px;width:166px;height:20px;text-align:center;line-height:20px;">AND (2) @ 1.2</div>
<div class="c pu" style="left:437px;top:708px;width:401px;height:19px;text-align:left;line-height:19px;padding-left:3px;">C [BOX]</div>
<div class="a" style="left:437px;top:610px;width:2px;height:117px;background:#3a3836"></div>
<div class="a" style="left:837.25px;top:610px;width:1.5px;height:117px;background:#3a3836"></div>
<div class="a" style="left:925.25px;top:610px;width:1.5px;height:117px;background:#3a3836"></div>
<div class="a" style="left:1026.25px;top:610px;width:1.5px;height:117px;background:#3a3836"></div>
<div class="a" style="left:1126.25px;top:610px;width:1.5px;height:117px;background:#3a3836"></div>
<div class="a" style="left:1291px;top:610px;width:2px;height:117px;background:#3a3836"></div>
<div class="a" style="left:437px;top:648.25px;width:856px;height:1.5px;background:#3a3836"></div>
<div class="a" style="left:437px;top:668.25px;width:856px;height:1.5px;background:#3a3836"></div>
<div class="a" style="left:437px;top:687.25px;width:856px;height:1.5px;background:#3a3836"></div>
<div class="a" style="left:437px;top:707.25px;width:856px;height:1.5px;background:#3a3836"></div>
<div class="a" style="left:437px;top:726.25px;width:856px;height:1.5px;background:#3a3836"></div>
<div class="tt" style="left:696px;top:480px;line-height:28px">Failure Mitigation Report</div>
<div class="a" style="left:605px;top:701px;width:919px;height:228px;overflow:hidden">
<div class="a" style="left:0;top:3px;width:919px;height:400px;background:#fdfdfb;border-left:7px solid #bf2e2a;border-top:8px solid #bf2e2a;border-right:2.5px solid #bf2e2a"></div>
<div class="blk" style="left:35px;top:90px;width:856px;height:27px;line-height:27px">Critical Event 1</div>
<div class="expr" style="left:35px;top:117px;width:856px;height:55px;line-height:55px">(B OR (C OR E)) AND (D OR E)</div>
<div class="a" style="left:35px;top:172px;width:856px;height:38px;background:#d8d2cf"></div>
<div class="c" style="left:35px;top:172px;width:282px;height:38px;font-weight:bold;text-align:center"><div style="position:absolute;left:0;right:0;bottom:2px;line-height:17px">Failure [Object]</div></div>
<div class="c" style="left:317px;top:172px;width:100px;height:38px;font-weight:bold;text-align:center"><div style="position:absolute;left:0;right:0;bottom:2px;line-height:17px">Individual<br>PoF (Q)</div></div>
<div class="c" style="left:417px;top:172px;width:102px;height:38px;font-weight:bold;text-align:center"><div style="position:absolute;left:0;right:0;bottom:2px;line-height:17px">Birnbaum</div></div>
<div class="c" style="left:519px;top:172px;width:94px;height:38px;font-weight:bold;text-align:center"><div style="position:absolute;left:0;right:0;bottom:2px;line-height:17px">CIF</div></div>
<div class="c" style="left:613px;top:172px;width:97px;height:38px;font-weight:bold;text-align:center"><div style="position:absolute;left:0;right:0;bottom:2px;line-height:17px">RAW</div></div>
<div class="c" style="left:710px;top:172px;width:91px;height:38px;font-weight:bold;text-align:center"><div style="position:absolute;left:0;right:0;bottom:2px;line-height:17px">RRW</div></div>
<div class="c" style="left:801px;top:172px;width:90px;height:38px;font-weight:bold;text-align:center"><div style="position:absolute;left:0;right:0;bottom:2px;line-height:17px">Fussell-<br>Vesely</div></div>
<div class="c pu" style="left:35px;top:210px;width:282px;height:18px;text-align:left;line-height:18px;padding-left:3px;">E [BOX]</div>
<div class="c " style="left:317px;top:210px;width:100px;height:18px;text-align:center;line-height:18px;">5.000E-007</div>
<div class="c " style="left:417px;top:210px;width:102px;height:18px;text-align:center;line-height:18px;">9.990E-001</div>
<div class="c " style="left:519px;top:210px;width:94px;height:18px;text-align:center;line-height:18px;">0.998944</div>
<div class="c " style="left:613px;top:210px;width:97px;height:18px;text-align:center;line-height:18px;">1999888.507</div>
<div class="c " style="left:710px;top:210px;width:91px;height:18px;text-align:center;line-height:18px;">17858.246</div>
<div class="c b" style="left:801px;top:210px;width:90px;height:18px;text-align:center;line-height:18px;">0.999944</div>
<div class="a" style="left:35px;top:172px;width:2px;height:56px;background:#3a3836"></div>
<div class="a" style="left:316.25px;top:172px;width:1.5px;height:56px;background:#3a3836"></div>
<div class="a" style="left:416.25px;top:172px;width:1.5px;height:56px;background:#3a3836"></div>
<div class="a" style="left:518.25px;top:172px;width:1.5px;height:56px;background:#3a3836"></div>
<div class="a" style="left:612.25px;top:172px;width:1.5px;height:56px;background:#3a3836"></div>
<div class="a" style="left:709.25px;top:172px;width:1.5px;height:56px;background:#3a3836"></div>
<div class="a" style="left:800.25px;top:172px;width:1.5px;height:56px;background:#3a3836"></div>
<div class="a" style="left:889px;top:172px;width:2px;height:56px;background:#3a3836"></div>
<div class="a" style="left:35px;top:209.25px;width:856px;height:1.5px;background:#3a3836"></div>
<div class="tt" style="left:269px;top:38px;line-height:28px">Importance Measures Report</div>
</div>
<div class="a" style="left:1330px;top:701px;width:194px;height:4px;background:linear-gradient(to right,#3a1a18 0px,#c03a36 25px,#d23c38 60px,#c8302c 194px)"></div>
<div class="a" style="left:605px;top:929px;width:713px;height:11px;background:#b5b5b5"></div>
<div class="a" style="left:1318px;top:929px;width:206px;height:11px;background:#e3e3e3"></div>
<div class="a" style="left:605px;top:940px;width:919px;height:1px;background:#a9c8e8"></div>
</body></html>
